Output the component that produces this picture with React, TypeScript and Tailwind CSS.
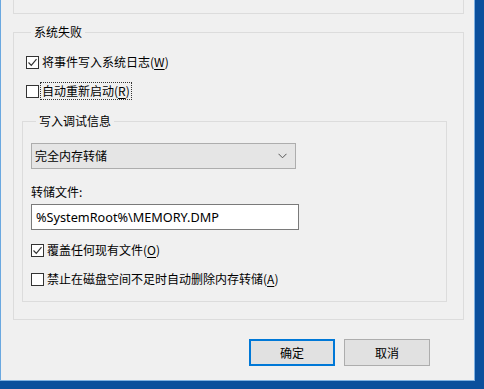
const font = { fontFamily: '"Noto Sans CJK SC", "Noto Sans", sans-serif' }

function CheckBox({ checked }: { checked: boolean }) {
  return (
    <span className="flex h-[13px] w-[13px] shrink-0 items-center justify-center border border-[#333333] bg-white">
      {checked && (
        <svg width="11" height="11" viewBox="0 0 11 11">
          <path d="M1.5 5.5 L4.3 8.3 L9.5 2.2" fill="none" stroke="#333333" strokeWidth="1.2" />
        </svg>
      )}
    </span>
  )
}

function CheckRow({ checked, label, hotkey, focused }: { checked: boolean; label: string; hotkey: string; focused?: boolean }) {
  return (
    <div className="flex h-[16px] items-center gap-[3px]">
      <CheckBox checked={checked} />
      <span
        className={`text-[12px] leading-[16px] text-black ${focused ? "-ml-[1px] px-[1px] outline-1 outline-dotted outline-[#333333]" : ""}`}
      >
        {label}(<span className="underline underline-offset-2">{hotkey}</span>)
      </span>
    </div>
  )
}

export default function App() {
  return (
    <div className="h-[389px] w-[484px] overflow-hidden bg-[#0b4f9c]" style={font}>
      <div className="h-[381px] w-[475px] border-r border-b border-[#7fb0e0] bg-[#0b4f9c]">
        <div className="h-[380px] w-[474px] border-l border-[#6aa8e0] bg-[#f0f0f0]">
          {/* top group (cut off) */}
          <div className="ml-[12px] h-[14px] w-[451px] border-x border-b border-[#dcdcdc]" />

          {/* 系统失败 */}
          <fieldset className="ml-[12px] mt-[10px] w-[451px] border border-[#dcdcdc] px-[12px] pb-[17px]">
            <legend className="ml-[5px] px-[3px] text-[12px] leading-[16px] text-black">系统失败</legend>
            <div className="mt-[14px] flex flex-col gap-[13px]">
              <CheckRow checked label="将事件写入系统日志" hotkey="W" />
              <CheckRow checked={false} label="自动重新启动" hotkey="R" focused />
            </div>

            {/* 写入调试信息 */}
            <fieldset className="ml-[-4px] mt-[14px] w-[425px] border border-[#dcdcdc] px-[8px] pb-[14px]">
              <legend className="ml-[5px] px-[3px] text-[12px] leading-[16px] text-black">写入调试信息</legend>
              <div className="mt-[14px] flex h-[26px] w-[265px] items-center justify-between border border-[#adadad] bg-[#e5e5e5] pl-[3px] pr-[8px]">
                <span className="text-[12px] leading-[16px] text-black">完全内存转储</span>
                <svg width="9" height="6" viewBox="0 0 9 6">
                  <path d="M0.5 0.8 L4.5 4.8 L8.5 0.8" fill="none" stroke="#555555" strokeWidth="1" />
                </svg>
              </div>
              <div className="mt-[15px] text-[12px] leading-[16px] text-black">转储文件:</div>
              <div className="mt-[4px] flex h-[26px] w-[268px] items-center border border-[#7a7a7a] bg-white pl-[4px]">
                <span className="text-[12.7px] leading-[16px] text-black" style={{ fontFamily: '"Noto Sans", sans-serif' }}>
                  %SystemRoot%\MEMORY.DMP
                </span>
              </div>
              <div className="mt-[12px] flex flex-col gap-[13px]">
                <CheckRow checked label="覆盖任何现有文件" hotkey="O" />
                <CheckRow checked={false} label="禁止在磁盘空间不足时自动删除内存转储" hotkey="A" />
              </div>
            </fieldset>
          </fieldset>

          {/* buttons */}
          <div className="ml-[248px] mt-[19px] flex gap-[9px]">
            <button className="flex h-[27px] w-[86px] items-center justify-center border-2 border-[#0078d7] bg-[#e1e1e1] text-[12px] text-black">
              确定
            </button>
            <button className="flex h-[27px] w-[86px] items-center justify-center border border-[#adadad] bg-[#e1e1e1] text-[12px] text-black">
              取消
            </button>
          </div>
        </div>
      </div>
    </div>
  )
}
